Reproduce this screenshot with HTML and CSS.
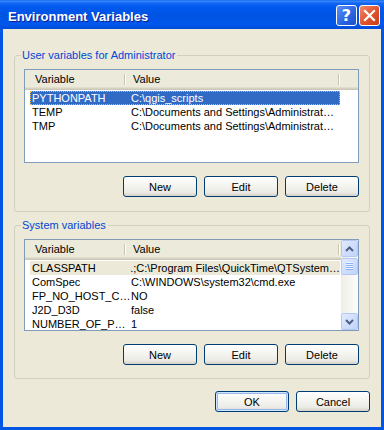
FILE: index.html
```html
<!DOCTYPE html>
<html lang="en">
<head>
  <meta charset="UTF-8">
  <title>Environment Variables</title>
  <link rel="stylesheet" href="styles.css">
</head>
<body>

  <div class="window">
    <div class="titlebar">
      <span class="title">Environment Variables</span>
      <div class="caption-btns">
        <span class="cap-btn help">?</span>
        <span class="cap-btn close">
          <svg width="13" height="13" viewBox="0 0 13 13">
            <path d="M2 2 L11 11 M11 2 L2 11" stroke="#fff" stroke-width="2.2" stroke-linecap="square"/>
          </svg>
        </span>
      </div>
    </div>

    <div class="client">
      <fieldset class="group">
        <legend>User variables for Administrator</legend>
        <div class="list list-user">
          <div class="list-main">
            <div class="list-header">
              <div class="hcol hcol-name">Variable</div>
              <div class="hcol hcol-value">Value</div>
            </div>
            <div class="rows">
              <div class="row selected"><span class="cell-name">PYTHONPATH</span><span class="cell-value">C:\qgis_scripts</span></div>
              <div class="row"><span class="cell-name">TEMP</span><span class="cell-value">C:\Documents and Settings\Administrat…</span></div>
              <div class="row"><span class="cell-name">TMP</span><span class="cell-value">C:\Documents and Settings\Administrat…</span></div>
            </div>
          </div>
        </div>
        <div class="btn-row">
          <button class="btn">New</button>
          <button class="btn">Edit</button>
          <button class="btn">Delete</button>
        </div>
      </fieldset>

      <fieldset class="group group-system">
        <legend>System variables</legend>
        <div class="list list-system">
          <div class="list-main">
            <div class="list-header">
              <div class="hcol hcol-name">Variable</div>
              <div class="hcol hcol-value">Value</div>
            </div>
            <div class="rows">
              <div class="row inactive"><span class="cell-name">CLASSPATH</span><span class="cell-value">.;C:\Program Files\QuickTime\QTSystem…</span></div>
              <div class="row"><span class="cell-name">ComSpec</span><span class="cell-value">C:\WINDOWS\system32\cmd.exe</span></div>
              <div class="row"><span class="cell-name">FP_NO_HOST_C…</span><span class="cell-value">NO</span></div>
              <div class="row"><span class="cell-name">J2D_D3D</span><span class="cell-value">false</span></div>
              <div class="row"><span class="cell-name">NUMBER_OF_P…</span><span class="cell-value">1</span></div>
            </div>
          </div>
          <div class="scrollbar">
            <div class="sb-btn">
              <svg width="9" height="6" viewBox="0 0 9 6"><path d="M1 5 L4.5 1.5 L8 5" fill="none" stroke="#4D6185" stroke-width="2"/></svg>
            </div>
            <div class="sb-thumb">
              <span></span><span></span><span></span><span></span>
            </div>
            <div class="sb-track"></div>
            <div class="sb-btn">
              <svg width="9" height="6" viewBox="0 0 9 6"><path d="M1 1 L4.5 4.5 L8 1" fill="none" stroke="#4D6185" stroke-width="2"/></svg>
            </div>
          </div>
        </div>
        <div class="btn-row">
          <button class="btn">New</button>
          <button class="btn">Edit</button>
          <button class="btn">Delete</button>
        </div>
      </fieldset>

      <div class="dialog-btns">
        <button class="btn default">OK</button>
        <button class="btn">Cancel</button>
      </div>
    </div>
  </div>

</body>
</html>
```

FILE: styles.css
```css
body {
  margin: 0;
  padding: 0;
  font-family: 'Liberation Sans', sans-serif;
  font-size: 11px;
  color: #000;
  background: #fff;
}

.window {
  width: 384px;
  height: 430px;
  display: flex;
  flex-direction: column;
}

/* title bar */
.titlebar {
  height: 29px;
  flex-shrink: 0;
  box-sizing: border-box;
  padding: 2px 4px 0 8px;
  display: flex;
  align-items: center;
  justify-content: space-between;
  background: linear-gradient(#0A5AE6 0, #3C8EFF 1px, #1468F4 3px, #0058EE 7px, #0054E3 16px, #0057EC 24px, #004CD8 29px);
}

.title {
  color: #fff;
  font-weight: bold;
  font-size: 13px;
  margin-top: 2px;
  text-shadow: 1px 1px 0 #0A1E9A;
}

.caption-btns {
  display: flex;
  gap: 2px;
}

.cap-btn {
  width: 21px;
  height: 21px;
  box-sizing: border-box;
  border: 1px solid #fff;
  border-radius: 3px;
  display: flex;
  align-items: center;
  justify-content: center;
}

.help {
  background: linear-gradient(135deg, #5B92F7, #2A63E0 60%, #1D50C9);
  color: #fff;
  font-family: 'DejaVu Sans', sans-serif;
  font-weight: bold;
  font-size: 16px;
}

.close {
  background: linear-gradient(135deg, #F0896A, #E1522B 55%, #C83E16);
}

/* dialog body */
.client {
  flex: 1;
  background: #ECE9D8;
  border: 3px solid #0355E6;
  border-top: 0;
  padding: 20px 11px 0 11px;
}

.group {
  margin: 0;
  padding: 7px 10px 14px 9px;
  border: 1px solid #D0D0BF;
  border-radius: 3px;
  min-width: 0;
}

.group-system {
  margin-top: 7px;
  padding-bottom: 13px;
}

.group legend {
  color: #0046D5;
  line-height: 13px;
  padding: 0 2px 0 1px;
  margin-left: -3px;
}

/* list views */
.list {
  box-sizing: border-box;
  border: 1px solid #7F9DB9;
  background: #fff;
  display: flex;
  overflow: hidden;
}

.list-user {
  height: 94px;
}

.list-system {
  height: 92px;
}

.list-main {
  flex: 1;
  min-width: 0;
}

.list-header {
  height: 20px;
  display: flex;
  background: #EBEADB;
  box-shadow: inset 0 -1px #CBC7B8, inset 0 -2px #D6D2C2, inset 0 -3px #E2DECD;
}

.hcol {
  position: relative;
  line-height: 19px;
  box-sizing: border-box;
}

.hcol::after {
  content: '';
  position: absolute;
  right: 0;
  top: 4px;
  bottom: 5px;
  width: 1px;
  background: #C7C5B2;
  box-shadow: 1px 0 #fff;
}

.hcol-name {
  width: 100px;
  padding-left: 10px;
}

.hcol-value {
  width: 214px;
  padding-left: 8px;
}

.rows {
  padding-top: 1px;
}

.row {
  display: flex;
  height: 14px;
  line-height: 14px;
  width: 310px;
  margin-left: 5px;
  white-space: nowrap;
}

.cell-name {
  width: 99px;
  padding-left: 2px;
  box-sizing: border-box;
}

.cell-value {
  padding-left: 2px;
}

.row.selected {
  background: #316AC5;
  color: #fff;
  outline: 1px dotted #E9B949;
  outline-offset: -1px;
}

.row.inactive {
  background: #ECE9D8;
}

/* scrollbar */
.scrollbar {
  width: 17px;
  flex-shrink: 0;
  display: flex;
  flex-direction: column;
  background: linear-gradient(to right, #EEEDE5, #FDFDFA);
}

.sb-btn,
.sb-thumb {
  height: 17px;
  box-sizing: border-box;
  border: 1px solid #B4C8F6;
  border-radius: 2px;
  background: linear-gradient(135deg, #E1EAFE, #C1D3FB);
  display: flex;
  align-items: center;
  justify-content: center;
}

.sb-thumb {
  flex-direction: column;
  gap: 1px;
  margin-top: 1px;
}

.sb-thumb span {
  width: 7px;
  height: 1px;
  background: #8CB0F8;
  box-shadow: 0 -1px #EEF4FE;
}

.sb-track {
  flex: 1;
}

/* buttons */
.btn-row,
.dialog-btns {
  display: flex;
  justify-content: flex-end;
  gap: 7px;
}

.btn-row {
  margin-top: 13px;
}

.group-system .btn-row {
  margin-top: 13px;
}

.dialog-btns {
  margin-top: 12px;
}

.btn {
  width: 74px;
  height: 21px;
  padding: 0;
  font-family: inherit;
  font-size: 11px;
  color: #000;
  border: 1px solid #003C74;
  border-radius: 3px;
  background: linear-gradient(#FFFFFF, #F4F4F0 45%, #ECEBE6 80%, #D8D2C6);
}

.btn.default {
  box-shadow: inset 0 0 0 1px #CEE7FF, inset 0 0 0 2px #98B8EA;
}
```
